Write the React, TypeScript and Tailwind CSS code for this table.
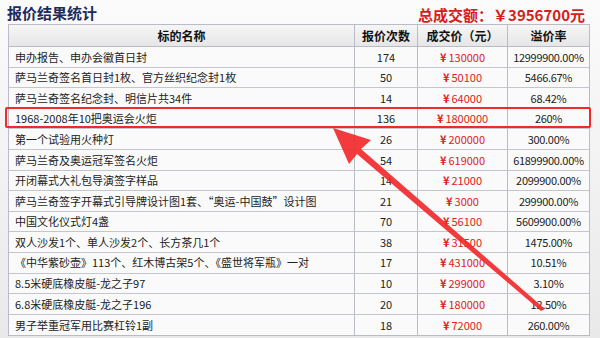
import type { ReactNode } from 'react';

type Row = { name: string; count: number; price: string; rate: string };

const ROWS: Row[] = [
  { name: '申办报告、申办会徽首日封', count: 174, price: '130000', rate: '12999900.00%' },
  { name: '萨马兰奇签名首日封1枚、官方丝织纪念封1枚', count: 50, price: '50100', rate: '5466.67%' },
  { name: '萨马兰奇签名纪念封、明信片共34件', count: 14, price: '64000', rate: '68.42%' },
  { name: '1968-2008年10把奥运会火炬', count: 136, price: '1800000', rate: '260%' },
  { name: '第一个试验用火种灯', count: 26, price: '200000', rate: '300.00%' },
  { name: '萨马兰奇及奥运冠军签名火炬', count: 54, price: '619000', rate: '61899900.00%' },
  { name: '开闭幕式大礼包导演签字样品', count: 14, price: '21000', rate: '2099900.00%' },
  { name: '萨马兰奇签字开幕式引导牌设计图1套、“奥运-中国鼓”设计图', count: 21, price: '3000', rate: '299900.00%' },
  { name: '中国文化仪式灯4盏', count: 70, price: '56100', rate: '5609900.00%' },
  { name: '双人沙发1个、单人沙发2个、长方茶几1个', count: 38, price: '31500', rate: '1475.00%' },
  { name: '《中华紫砂壶》113个、红木博古架5个、《盛世将军瓶》一对', count: 17, price: '431000', rate: '10.51%' },
  { name: '8.5米硬底橡皮艇-龙之子97', count: 10, price: '299000', rate: '3.10%' },
  { name: '6.8米硬底橡皮艇-龙之子196', count: 20, price: '180000', rate: '12.50%' },
  { name: '男子举重冠军用比赛杠铃1副', count: 18, price: '72000', rate: '260.00%' },
];

const FONT = "font-['SimSun','Noto_Sans_CJK_SC',sans-serif]";

function Cell({ w, children, className = '' }: { w: string; children: ReactNode; className?: string }) {
  return (
    <div className={`${w} flex h-full shrink-0 items-center overflow-hidden whitespace-nowrap border-r border-[#b9bcc6] last:border-r-0 ${className}`}>
      {children}
    </div>
  );
}

function Arrow() {
  // tip (333,128) -> tail (543,310)
  return (
    <svg className="pointer-events-none absolute left-0 top-0" width="600" height="338" viewBox="0 0 600 338">
      <polygon
        points="333,128 349,164 357,154 541,311 545,309 361,149 371,140"
        fill="#f2292b"
        fillOpacity="0.92"
      />
    </svg>
  );
}

export default function App() {
  return (
    <div className={`relative h-[338px] w-[600px] overflow-hidden bg-gradient-to-b from-[#fbfbfb] to-[#e9e9e9] ${FONT}`}>
      <div className="flex h-[24px] items-center justify-between pl-[7px] pr-[15px]">
        <span className="text-[15px] font-bold leading-none text-[#1c2c5b]">报价结果统计</span>
        <span className="mt-[5px] text-[15px] font-bold leading-none text-[#d81c1c]">总成交额：￥3956700元</span>
      </div>

      <div className="ml-[8px] w-[582px] border border-[#b9bcc6] bg-[#fafafa] text-[11px] text-[#222]">
        <div className="flex h-[22px] border-b border-[#b9bcc6] bg-gradient-to-b from-[#f6f6f6] to-[#e6e6e6] text-[12px] font-bold text-[#111]">
          <Cell w="w-[346px]" className="justify-center">标的名称</Cell>
          <Cell w="w-[63px]" className="justify-center">报价次数</Cell>
          <Cell w="w-[90px]" className="justify-center">成交价（元）</Cell>
          <Cell w="w-[81px]" className="justify-center">溢价率</Cell>
        </div>
        {ROWS.map((r) => (
          <div key={r.name} className="flex h-[20.6px] border-b border-[#c4c6ce] last:border-b-0">
            <Cell w="w-[346px]" className="pl-[6px]">{r.name}</Cell>
            <Cell w="w-[63px]" className="justify-center">{r.count}</Cell>
            <Cell w="w-[90px]" className="justify-center text-[#e02020]">
              <span className="mr-[2px] font-bold">¥</span>{r.price}
            </Cell>
            <Cell w="w-[81px]" className="justify-center tracking-[-0.3px]">{r.rate}</Cell>
          </div>
        ))}
      </div>

      <div className="pointer-events-none absolute left-[5px] top-[107px] h-[21px] w-[586px] rounded-[2px] border-2 border-[#ee2a2a]" />
      <Arrow />
    </div>
  );
}
